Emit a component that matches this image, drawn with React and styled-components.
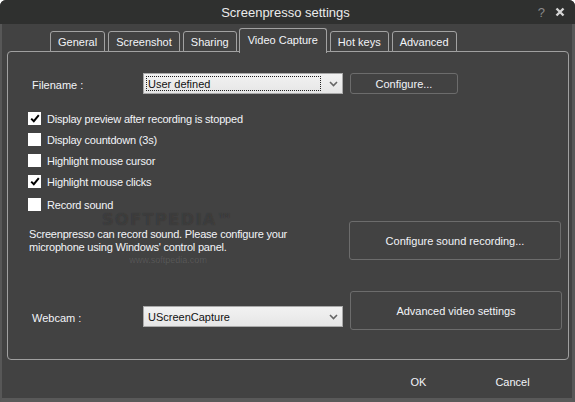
import React from 'react';
import styled, { createGlobalStyle } from 'styled-components';

const GlobalStyle = createGlobalStyle`
  html, body {
    margin: 0;
    background: #ffffff;
  }
  * { box-sizing: border-box; }
`;

const Window = styled.div`
  width: 575px;
  height: 402px;
  display: flex;
  flex-direction: column;
  background: #424242;
  border-radius: 6px 6px 0 0;
  overflow: hidden;
  font-family: "Liberation Sans", Arial, sans-serif;
  font-size: 11px;
  color: #f2f4f8;
`;

const TitleBar = styled.div`
  height: 24px;
  flex: none;
  display: grid;
  grid-template-columns: 1fr auto 1fr;
  align-items: center;
  background: #2f302f;
  padding: 0 10px 0 12px;
`;

const Title = styled.div`
  grid-column: 2;
  font-size: 13px;
  color: #ebebeb;
  padding-right: 6px;
`;

const Controls = styled.div`
  justify-self: end;
  display: flex;
  align-items: center;
  gap: 10px;
`;

const Help = styled.span`
  font-size: 13px;
  color: #8a8a8a;
`;

const Body = styled.div`
  flex: 1;
  display: flex;
  flex-direction: column;
  border-left: 2px solid #575757;
  border-right: 3px solid #575757;
  border-bottom: 4px solid #595959;
  padding-top: 4px;
`;

const TabRow = styled.div`
  display: flex;
  align-items: flex-end;
  gap: 2px;
  padding-left: 47px;
  height: 24px;
  position: relative;
  z-index: 1;
`;

const Tab = styled.div`
  height: ${(p) => (p.$active ? '25px' : '21px')};
  margin-bottom: ${(p) => (p.$active ? '-1px' : '0')};
  margin-left: ${(p) => (p.$active ? '0' : '1px')};
  padding: 0 ${(p) => (p.$active ? '8px' : '7px')};
  padding-top: ${(p) => (p.$active ? '5px' : '4px')};
  display: flex;
  align-items: flex-start;
  border: 1px solid #a2a2a2;
  border-bottom: ${(p) => (p.$active ? 'none' : '1px solid #a2a2a2')};
  border-radius: 3px 3px 0 0;
  background: #424242;
  color: #f2f4f8;
  font-size: 11px;
  white-space: nowrap;
`;

const Panel = styled.div`
  position: relative;
  height: 309px;
  margin: -1px 3px 0 5px;
  border: 1px solid #a0a0a0;
  border-radius: 4px;
  padding: 21px 7px 0 20px;
  display: flex;
  flex-direction: column;
`;

const FieldRow = styled.div`
  display: flex;
  align-items: center;
  height: 21px;
  margin-bottom: ${(p) => p.$bottom || '0'};
`;

const Label = styled.div`
  width: 115px;
  flex: none;
  padding-left: 4px;
  padding-top: 2px;
`;

const SelectBox = styled.div`
  width: 200px;
  height: 21px;
  flex: none;
  display: flex;
  align-items: center;
  padding: 0 4px 0 2px;
  background: linear-gradient(#f2f2f2, #e6e6e6);
  border: 1px solid #a9a9a9;
  color: #111;
  font-size: 11px;
`;

const SelectText = styled.div`
  flex: 1;
  height: 15px;
  line-height: 14px;
  padding-left: 1px;
  border: 1px dotted ${(p) => (p.$focused ? '#222' : 'transparent')};
  margin-right: 8px;
`;

const Chevron = () => (
  <svg width="9" height="6" viewBox="0 0 9 6">
    <path d="M1 1 L4.5 4.5 L8 1" fill="none" stroke="#666" strokeWidth="1.6" />
  </svg>
);

const Button = styled.div`
  width: ${(p) => p.$w || '108px'};
  height: ${(p) => p.$h || '21px'};
  margin-left: ${(p) => p.$ml || '0'};
  flex: none;
  display: flex;
  align-items: center;
  justify-content: center;
  border: 1px solid #6c6c6c;
  border-radius: 3px;
  background: #424242;
  color: #f2f4f8;
  font-size: 11px;
`;

const CheckList = styled.div`
  display: flex;
  flex-direction: column;
  margin-top: 14px;
`;

const CheckRow = styled.div`
  display: flex;
  align-items: center;
  gap: 6px;
  height: 21px;
  letter-spacing: -0.2px;
  margin-top: ${(p) => (p.$last ? '2px' : '0')};
`;

const Box = styled.div`
  width: 13px;
  height: 13px;
  background: #ffffff;
  display: flex;
  align-items: center;
  justify-content: center;
`;

const Tick = () => (
  <svg width="10" height="9" viewBox="0 0 10 9">
    <path d="M1.2 4.6 L3.8 7.2 L8.8 1.2" fill="none" stroke="#000" strokeWidth="2" />
  </svg>
);

const SplitRow = styled.div`
  display: grid;
  grid-template-columns: 1fr 212px;
  column-gap: 7px;
  align-items: ${(p) => p.$align || 'center'};
  margin-top: ${(p) => p.$top};
`;

const Note = styled.p`
  margin: 0;
  padding-left: 1px;
  padding-top: 1px;
  line-height: 13px;
  font-size: 11px;
  letter-spacing: -0.2px;
`;

const Footer = styled.div`
  flex: 1;
  display: flex;
  justify-content: flex-end;
  gap: 19px;
  padding: 10px 22px 0 0;
`;

const FooterButton = styled.div`
  width: 75px;
  height: 23px;
  display: flex;
  align-items: center;
  justify-content: center;
  font-size: 11px;
  color: #f2f4f8;
`;

const Watermark = styled.div`
  position: absolute;
  left: 94px;
  top: 160px;
  pointer-events: none;
  display: flex;
  flex-direction: column;
  align-items: center;
  line-height: 1;
`;

const MarkBig = styled.div`
  font-family: "DejaVu Sans", sans-serif;
  font-weight: bold;
  font-size: 16px;
  letter-spacing: 1.5px;
  color: rgba(255, 255, 255, 0.07);
  text-shadow: 0 0 1px rgba(0, 0, 0, 0.3);
`;

const MarkSmall = styled.div`
  font-size: 9px;
  margin-top: 28px;
  color: rgba(255, 255, 255, 0.12);
`;

const CloseIcon = () => (
  <svg width="10" height="10" viewBox="0 0 10 10">
    <path d="M1.5 1.5 L8.5 8.5 M8.5 1.5 L1.5 8.5" stroke="#d6d6d6" strokeWidth="2.4" />
  </svg>
);

const tabs = ['General', 'Screenshot', 'Sharing', 'Video Capture', 'Hot keys', 'Advanced'];

const options = [
  { label: 'Display preview after recording is stopped', checked: true },
  { label: 'Display countdown (3s)', checked: false },
  { label: 'Highlight mouse cursor', checked: false },
  { label: 'Highlight mouse clicks', checked: true },
  { label: 'Record sound', checked: false },
];

export default function App() {
  return (
    <>
      <GlobalStyle />
      <Window>
        <TitleBar>
          <Title>Screenpresso settings</Title>
          <Controls>
            <Help>?</Help>
            <CloseIcon />
          </Controls>
        </TitleBar>
        <Body>
          <TabRow>
            {tabs.map((t) => (
              <Tab key={t} $active={t === 'Video Capture'}>{t}</Tab>
            ))}
          </TabRow>
          <Panel>
            <FieldRow>
              <Label>Filename :</Label>
              <SelectBox>
                <SelectText $focused>User defined</SelectText>
                <Chevron />
              </SelectBox>
              <Button $ml="7px">Configure...</Button>
            </FieldRow>

            <CheckList>
              {options.map((o, i) => (
                <CheckRow key={o.label} $last={i === options.length - 1}>
                  <Box>{o.checked && <Tick />}</Box>
                  <span>{o.label}</span>
                </CheckRow>
              ))}
            </CheckList>

            <SplitRow $top="6px">
              <Note>
                Screenpresso can record sound. Please configure your
                <br />
                microphone using Windows' control panel.
              </Note>
              <Button $w="212px" $h="39px">Configure sound recording...</Button>
            </SplitRow>

            <SplitRow $top="31px" $align="end">
              <FieldRow $bottom="3px">
                <Label>Webcam :</Label>
                <SelectBox>
                  <SelectText>UScreenCapture</SelectText>
                  <Chevron />
                </SelectBox>
              </FieldRow>
              <Button $w="212px" $h="39px">Advanced video settings</Button>
            </SplitRow>

            <Watermark>
              <MarkBig>SOFTPEDIA™</MarkBig>
              <MarkSmall>www.softpedia.com</MarkSmall>
            </Watermark>
          </Panel>
          <Footer>
            <FooterButton>OK</FooterButton>
            <FooterButton>Cancel</FooterButton>
          </Footer>
        </Body>
      </Window>
    </>
  );
}
